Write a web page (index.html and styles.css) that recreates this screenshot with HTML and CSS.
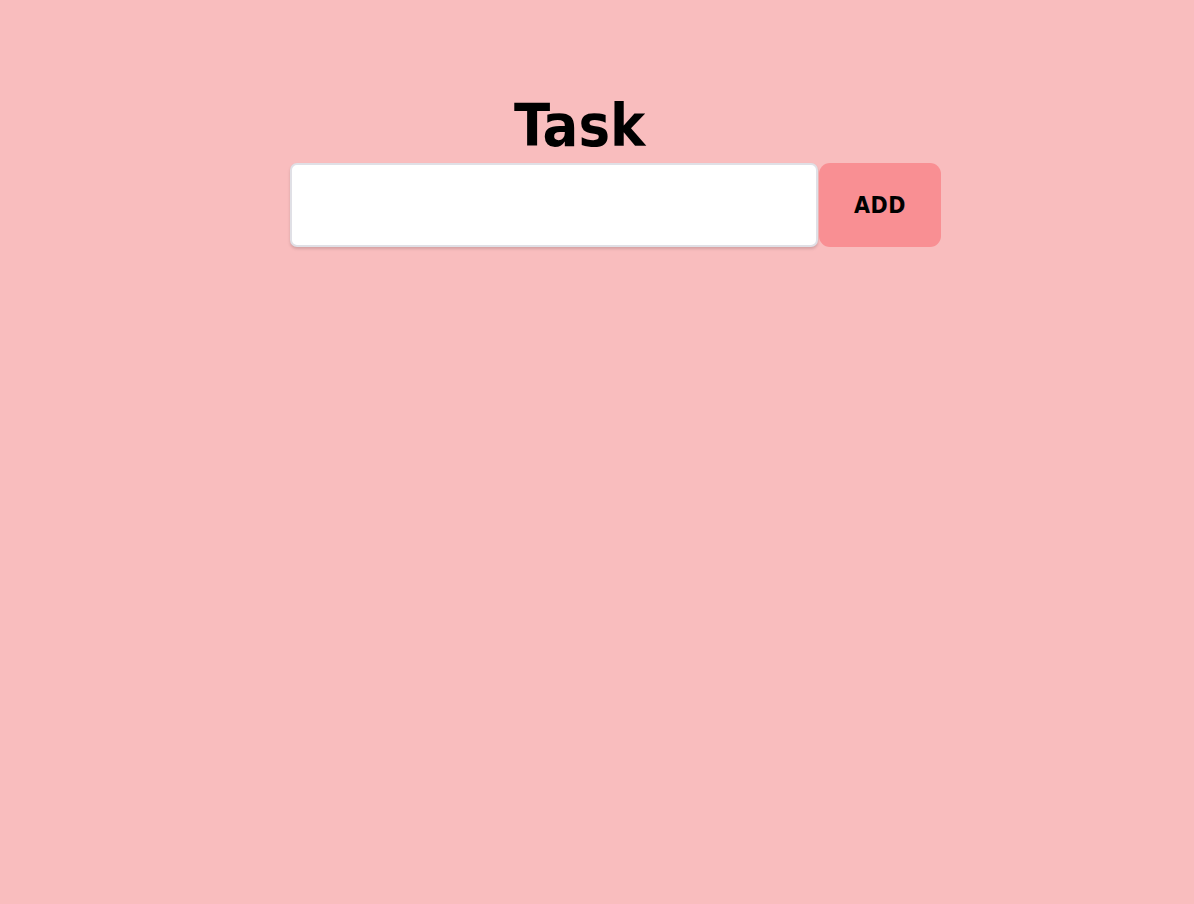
FILE: index.html
```html
<!DOCTYPE html>
<html>
<head>
<meta charset="utf-8">
<link rel="stylesheet" href="styles.css">
</head>
<body>
<div class="app">
  <h1 class="title">Task</h1>
  <form class="task-form">
    <input class="task-input" type="text">
    <button class="add-btn" type="button">ADD</button>
  </form>
</div>
</body>
</html>
```
FILE: styles.css
```css
html, body {
  margin: 0;
  padding: 0;
  height: 100%;
}
body {
  background: #f9bdbe;
  font-family: "DejaVu Sans Condensed", "DejaVu Sans", sans-serif;
}
.app {
  display: flex;
  flex-direction: column;
  align-items: flex-start;
  padding-top: 88px;
  padding-left: 290px;
}
.title {
  margin: 0 0 0 224px;
  font-size: 59px;
  font-weight: 700;
  line-height: 75px;
  color: #000;
}
.task-form {
  display: flex;
  gap: 1px;
}
.task-input {
  box-sizing: border-box;
  width: 528px;
  height: 84px;
  border: 2px solid #e0e0e6;
  border-radius: 7px;
  background: #fff;
  box-shadow: 0 2px 3px rgba(0,0,0,0.15);
  outline: none;
}
.add-btn {
  width: 122px;
  height: 84px;
  border: none;
  border-radius: 11px;
  background: #f98f93;
  color: #000;
  font-family: "DejaVu Sans Condensed", "DejaVu Sans", sans-serif;
  font-weight: 700;
  font-size: 23px;
  letter-spacing: 0.5px;
  padding: 0;
}
```
